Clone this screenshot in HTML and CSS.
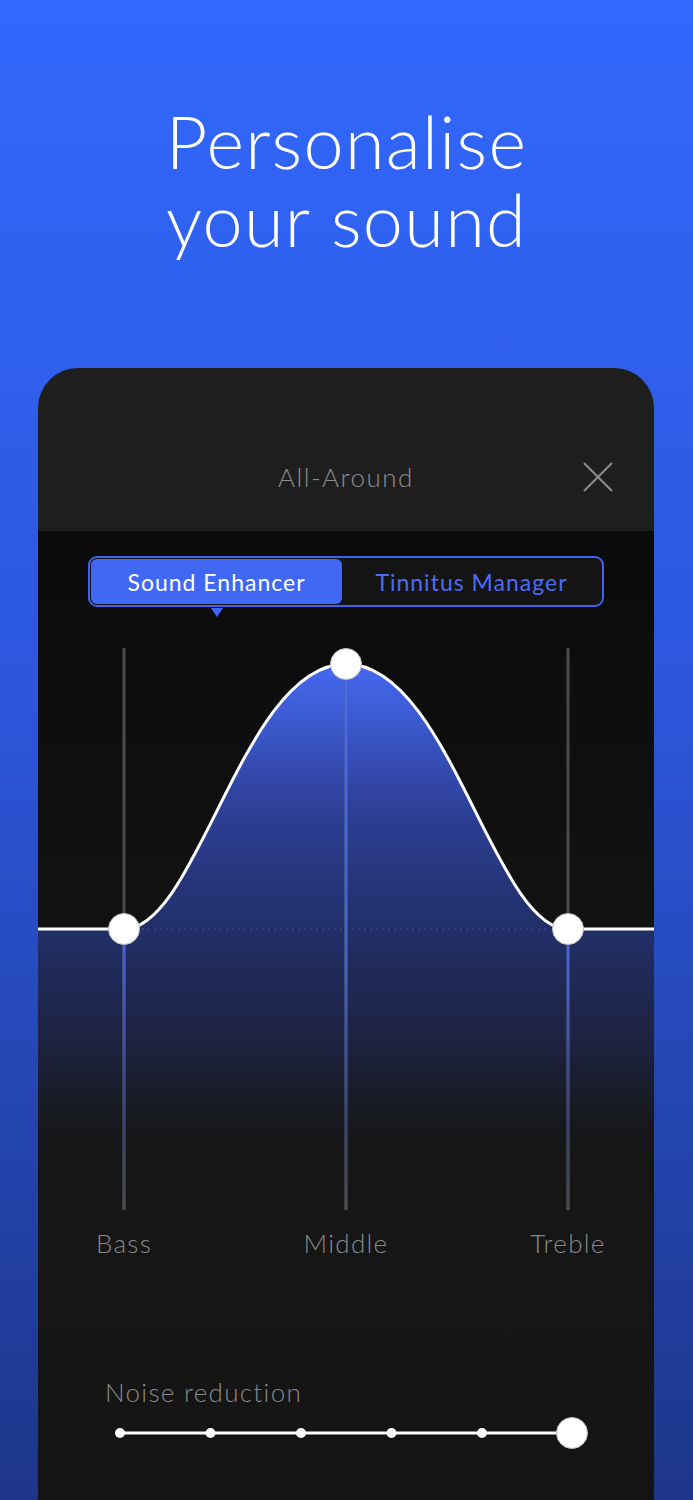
FILE: index.html
```html
<!DOCTYPE html>
<html>
<head>
	<meta charset="utf-8">
	<link rel="stylesheet" href="styles.css">
</head>
<body>
	<div class="hero">
		<h1 class="heroTitle">Personalise<br>your sound</h1>
	</div>

	<div class="card">
		<div class="cardHead">
			<span></span>
			<span class="programName">All-Around</span>
			<svg class="closeIcon" width="32" height="32" viewBox="0 0 32 32">
				<path d="M2 2 L30 30 M30 2 L2 30" stroke="#8a8a8a" stroke-width="2.2" fill="none"/>
			</svg>
		</div>

		<div class="cardBody">
			<div class="segment">
				<div class="segItem active">Sound Enhancer</div>
				<div class="segItem">Tinnitus Manager</div>
			</div>

			<svg class="chart" width="616" height="600" viewBox="0 0 616 600">
				<defs>
					<linearGradient id="bellFill" x1="0" y1="44" x2="0" y2="309" gradientUnits="userSpaceOnUse">
						<stop offset="0" stop-color="#4569f2"/>
						<stop offset="0.55" stop-color="#2d3f96"/>
						<stop offset="1" stop-color="#212f68"/>
					</linearGradient>
					<linearGradient id="lowFill" x1="0" y1="309" x2="0" y2="560" gradientUnits="userSpaceOnUse">
						<stop offset="0" stop-color="#22306a" stop-opacity="1"/>
						<stop offset="0.5" stop-color="#1e2446" stop-opacity="0.8"/>
						<stop offset="1" stop-color="#1a1a1a" stop-opacity="0"/>
					</linearGradient>
					<linearGradient id="lineBlue" x1="0" y1="44" x2="0" y2="590" gradientUnits="userSpaceOnUse">
						<stop offset="0" stop-color="#4b6cf0"/>
						<stop offset="0.55" stop-color="#4760c4"/>
						<stop offset="0.85" stop-color="#3a4168"/>
						<stop offset="1" stop-color="#4a4a4a"/>
					</linearGradient>
					<clipPath id="fillArea">
						<path d="M0,309 L86,309 C160,309 205,44 308,44 C411,44 456,309 530,309 L616,309 L616,600 L0,600 Z"/>
					</clipPath>
				</defs>

				<rect x="0" y="309" width="616" height="291" fill="url(#lowFill)"/>
				<path d="M86,309 C160,309 205,44 308,44 C411,44 456,309 530,309 Z" fill="url(#bellFill)"/>

				<g stroke="#4b4b4b" stroke-width="3">
					<line x1="86" y1="28" x2="86" y2="590"/>
					<line x1="308" y1="28" x2="308" y2="590"/>
					<line x1="530" y1="28" x2="530" y2="590"/>
				</g>
				<g stroke="url(#lineBlue)" stroke-width="3" clip-path="url(#fillArea)">
					<line x1="86" y1="28" x2="86" y2="590"/>
					<line x1="308" y1="28" x2="308" y2="590"/>
					<line x1="530" y1="28" x2="530" y2="590"/>
				</g>

				<line x1="104" y1="309" x2="512" y2="309" stroke="#5a6aa8" stroke-width="1.2" stroke-dasharray="2 4" opacity="0.6"/>

				<path d="M0,309 L86,309 C160,309 205,44 308,44 C411,44 456,309 530,309 L616,309" fill="none" stroke="#fff" stroke-width="3"/>

				<g fill="#fff" stroke="#bdbdbd" stroke-width="1">
					<circle cx="86" cy="309" r="15.5"/>
					<circle cx="308" cy="44" r="15.5"/>
					<circle cx="530" cy="309" r="15.5"/>
				</g>
			</svg>

			<div class="bandLabels">
				<span>Bass</span>
				<span>Middle</span>
				<span>Treble</span>
			</div>

			<div class="noise">
				<div class="noiseLabel">Noise reduction</div>
				<svg class="noiseSlider" width="616" height="40" viewBox="0 0 616 40">
					<line x1="82" y1="20" x2="534" y2="20" stroke="#fff" stroke-width="3"/>
					<g fill="#fff">
						<circle cx="82" cy="20" r="5"/>
						<circle cx="172.5" cy="20" r="5"/>
						<circle cx="263" cy="20" r="5"/>
						<circle cx="353.5" cy="20" r="5"/>
						<circle cx="444" cy="20" r="5"/>
						<circle cx="534" cy="20" r="15.5" stroke="#bdbdbd" stroke-width="1"/>
					</g>
				</svg>
			</div>
		</div>
	</div>
</body>
</html>
```

FILE: styles.css
```css
html,
body {
	margin: 0;
	padding: 0;
}

body {
	width: 693px;
	height: 1500px;
	overflow: hidden;
	background: linear-gradient(180deg, #3268fd 0%, #2c57dd 45%, #1d3589 100%);
	font-family: Lato, "Open Sans", sans-serif;
	font-weight: 300;
}

.hero {
	height: 368px;
	box-sizing: border-box;
	padding-top: 102px;
}

.heroTitle {
	margin: 0;
	text-align: center;
	color: #fff;
	font-size: 72px;
	font-weight: 300;
	line-height: 78px;
	letter-spacing: 1.3px;
}

.card {
	width: 616px;
	height: 1132px;
	margin-left: 38px;
	border-radius: 40px 40px 0 0;
	overflow: hidden;
	background: #1e1e1e;
}

.cardHead {
	height: 163px;
	box-sizing: border-box;
	padding: 92px 42px 0 42px;
	display: grid;
	grid-template-columns: 1fr auto 1fr;
	align-items: center;
	align-content: start;
}

.programName {
	color: #8e8e8e;
	font-size: 26px;
	line-height: 34px;
	letter-spacing: 1.5px;
}

.closeIcon {
	justify-self: end;
	margin-right: -2px;
}

.cardBody {
	height: 969px;
	background: linear-gradient(180deg, #0a0a0a 0%, #121212 40%, #161616 70%, #141414 100%);
	padding-top: 25px;
	box-sizing: border-box;
}

.segment {
	width: 516px;
	height: 51px;
	box-sizing: border-box;
	margin: 0 auto;
	border: 2px solid #3d63ef;
	border-radius: 9px;
	padding: 1px;
	display: flex;
	background: #141414;
}

.segItem {
	position: relative;
	flex: 1;
	display: flex;
	align-items: center;
	justify-content: center;
	color: #4a6cf7;
	font-size: 23px;
	font-weight: 400;
	letter-spacing: 1px;
	border-radius: 6px;
}

.segItem.active {
	flex: 0 0 251px;
	background: #4168f5;
	color: #fff;
}

.segItem.active::after {
	content: "";
	position: absolute;
	left: 50%;
	bottom: -13px;
	margin-left: -6px;
	border-left: 6px solid transparent;
	border-right: 6px solid transparent;
	border-top: 9px solid #4168f5;
}

.chart {
	display: block;
	margin-top: 13px;
}

.bandLabels {
	display: grid;
	grid-template-columns: repeat(3, 172px);
	column-gap: 50px;
	margin-top: 8px;
	text-align: center;
	color: #8a8a8a;
	font-size: 26px;
	line-height: 30px;
	letter-spacing: 1.3px;
}

.noise {
	margin-top: 119px;
}

.noiseLabel {
	padding-left: 67px;
	color: #8a8a8a;
	font-size: 26px;
	line-height: 30px;
	letter-spacing: 1.3px;
}

.noiseSlider {
	display: block;
	margin-top: 6px;
}
```
